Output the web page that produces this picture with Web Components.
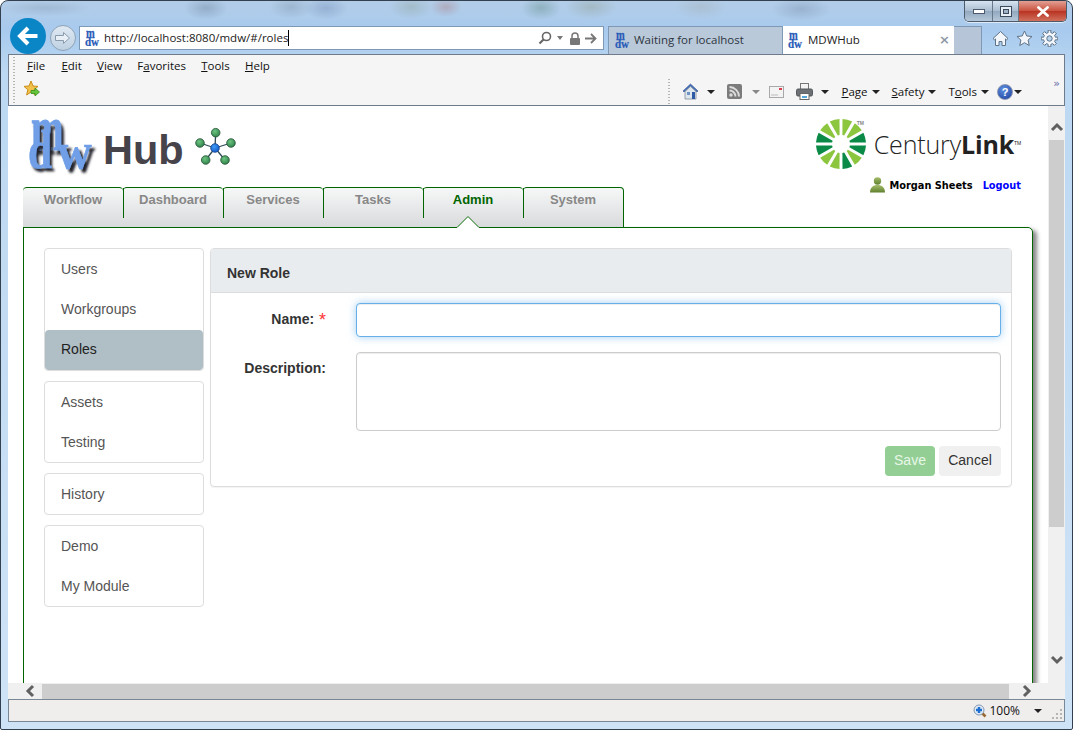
<!DOCTYPE html>
<html>
<head>
<meta charset="utf-8">
<title>MDWHub</title>
<style>
html, body { margin: 0; padding: 0; overflow: hidden; }
</style>
</head>
<body>
<ie-window>
    <ie-navbar slot="nav"></ie-navbar>
    <ie-toolbars slot="tools"></ie-toolbars>
    <mdw-page slot="page">
        <mdw-header></mdw-header>
        <mdw-tabs></mdw-tabs>
        <mdw-panel>
            <nav-card slot="nav">
                <nav-item>Users</nav-item>
                <nav-item>Workgroups</nav-item>
                <nav-item active>Roles</nav-item>
            </nav-card>
            <nav-card slot="nav">
                <nav-item>Assets</nav-item>
                <nav-item>Testing</nav-item>
            </nav-card>
            <nav-card slot="nav">
                <nav-item>History</nav-item>
            </nav-card>
            <nav-card slot="nav">
                <nav-item>Demo</nav-item>
                <nav-item>My Module</nav-item>
            </nav-card>
            <role-form></role-form>
        </mdw-panel>
    </mdw-page>
    <ie-scrollbar slot="vscroll" dir="v"></ie-scrollbar>
    <ie-scrollbar slot="hscroll" dir="h"></ie-scrollbar>
    <ie-status slot="status"></ie-status>
</ie-window>

<script>
const UI_FONT = `"Open Sans", "Noto Sans", sans-serif`

// small blue mdw favicon, used in the address bar and in both browser tabs
class mdwIcon extends HTMLElement {
    constructor() {
        super()
        this.attachShadow({ mode: 'open' }).innerHTML = `
<style>
:host { display: inline-block; width: 15px; height: 16px; flex: none; }
svg { display: block; overflow: visible; }
text { font-family: "Liberation Serif", serif; font-weight: 700; fill: #2a5cb8; stroke: #2a5cb8; stroke-width: .2px; }
</style>
<svg width="15" height="16" viewBox="0 0 15 16">
    <text transform="translate(1 8) scale(1.05 1.5)" font-size="10">m</text>
    <text transform="translate(0 15.500) scale(1.1 1.15)" font-size="10">dw</text>
</svg>`
    }
}
customElements.define('mdw-icon', mdwIcon)

// the aero glass window with its frame
class ieWindow extends HTMLElement {
    constructor() {
        super()
        this.attachShadow({ mode: 'open' }).innerHTML = `
<style>
:host {
    display: flex;
    flex-direction: column;
    box-sizing: border-box;
    width: 1073px;
    height: 730px;
    padding: 0 7px 7px;
    position: relative;
    overflow: hidden;
    border: 1px solid #33404f;
    border-radius: 8px 8px 2px 2px;
    background:
        radial-gradient(ellipse 22px 12px at 205px 7px, rgba(95,115,140,.35), transparent),
        radial-gradient(ellipse 22px 12px at 290px 6px, rgba(110,130,150,.3), transparent),
        radial-gradient(ellipse 22px 12px at 325px 7px, rgba(100,125,170,.35), transparent),
        radial-gradient(ellipse 22px 12px at 410px 6px, rgba(130,150,130,.3), transparent),
        radial-gradient(ellipse 16px 10px at 445px 6px, rgba(170,110,110,.35), transparent),
        radial-gradient(ellipse 20px 12px at 540px 7px, rgba(90,135,125,.4), transparent),
        radial-gradient(ellipse 26px 12px at 590px 6px, rgba(130,140,110,.3), transparent),
        radial-gradient(ellipse 26px 12px at 700px 6px, rgba(160,170,170,.35), transparent),
        radial-gradient(ellipse 30px 12px at 800px 8px, rgba(110,130,160,.35), transparent),
        radial-gradient(ellipse 45px 8px at 45px 7px, rgba(130,150,175,.35), transparent),
        linear-gradient(#b3cde8 0, #a8caee 30px, #bcd8f2 70px, #cfe3f6 100%);
}
.nav { flex: none; height: 53px; }
.tools { flex: none; height: 52px; }
.view { flex: none; display: flex; height: 577px; background: #fff; }
.h { flex: none; height: 16px; }
.status { flex: none; height: 23px; }
</style>
<div class="nav"><slot name="nav"></slot></div>
<div class="tools"><slot name="tools"></slot></div>
<div class="view"><slot name="page"></slot><slot name="vscroll"></slot></div>
<div class="h"><slot name="hscroll"></slot></div>
<div class="status"><slot name="status"></slot></div>`
    }
}
customElements.define('ie-window', ieWindow)

class ieNavbar extends HTMLElement {
    constructor() {
        super()
        // gear outline for the tools button
        let gear = ''
        for (let i = 0; i < 16; i++) {
            const rad = i % 2 ? 6 : 8.4
            for (const off of [-.17, .17]) {
                const t = i * Math.PI / 8 + off
                gear += `${i || off > 0 ? 'L' : 'M'}${(8.5 + rad * Math.cos(t)).toFixed(1)} ${(8.5 + rad * Math.sin(t)).toFixed(1)}`
            }
        }
        this.attachShadow({ mode: 'open' }).innerHTML = `
<style>
:host { display: flex; flex-direction: column; height: 53px; font: 11.5px ${UI_FONT}; color: #222; }
.caption { display: flex; justify-content: flex-end; height: 25px; margin-right: -2px; box-sizing: border-box; }
.caps { display: flex; height: 20px; border: 1px solid #4d5b6b; border-top: 0; border-radius: 0 0 5px 5px; overflow: hidden; box-shadow: 0 1px 0 rgba(255,255,255,.6); }
.caps div { display: flex; align-items: center; justify-content: center; height: 100%; background: linear-gradient(#d6e3f0, #a9bccf 50%, #93a9bf 52%, #b5c8da); border-right: 1px solid #66788a; box-sizing: border-box; }
.min { width: 28px; } .max { width: 26px; }
.close { width: 47px; border-right: 0 !important; background: linear-gradient(#e2a094, #c9503d 50%, #b93423 52%, #d0705c) !important; }
.row { display: flex; align-items: flex-start; height: 28px; }
.back { flex: none; width: 36px; height: 36px; margin: -8px 0 0 2px; border-radius: 50%; background: #0a85c6; display: flex; align-items: center; justify-content: center; position: relative; z-index: 2; }
.fwd { flex: none; box-sizing: border-box; width: 26px; height: 26px; margin: -1px 0 0 4px; border-radius: 50%; border: 1px solid #8fa3b6; background: linear-gradient(#dfe9f3, #bfd1e2); display: flex; align-items: center; justify-content: center; }
.addr { flex: none; box-sizing: border-box; display: flex; align-items: center; width: 525px; height: 24px; margin-left: 3px; padding: 0 6px 0 5px; background: #fff; border: 1px solid #7e99b5; }
.url { margin-left: 4px; border-right: 1px solid #000; line-height: 16px; white-space: nowrap; font-size: 11.5px; }
.addr-tools { display: flex; align-items: center; margin-left: auto; }
.caret { width: 0; height: 0; border: 3.500px solid transparent; border-top: 4px solid #777; border-bottom: 0; margin: 0 6px 0 5px; }
.tabs { display: flex; margin-left: 4px; height: 28px; }
.tab { box-sizing: border-box; display: flex; align-items: center; padding: 0 5px 2px 6px; height: 28px; border: 1px solid #7e99b5; border-bottom: 0; }
.tab span { margin-left: 4px; white-space: nowrap; }
.t1 { width: 174px; background: #b9c9da; color: #2d3540; border-right: 0; }
.t2 { width: 172px; background: #fff; border-width: 0 0 0 1px; padding: 1px 5px 2px 5px; }
.t2 span { margin-left: 5px; }
.t2 b { margin-left: auto; margin-right: -1px; font: 700 13px "DejaVu Sans", sans-serif; color: #8d98a3; }
.t3 { width: 28px; background: #b6c6d8; border-left: 0; }
.icons { display: flex; align-items: center; height: 24px; margin-left: 10px; gap: 7px; }
</style>
<div class="caption">
    <div class="caps">
        <div class="min"><svg width="12" height="6"><rect x="0.5" y="1.5" width="11" height="4" fill="#fff" stroke="#4a5a6a"/></svg></div>
        <div class="max"><svg width="12" height="11"><rect x="0.5" y="0.5" width="11" height="10" fill="#e6eef6" stroke="#3d4c5c"/><rect x="3.5" y="3.5" width="5" height="4" fill="#9db2c6" stroke="#3d4c5c"/></svg></div>
        <div class="close"><svg width="14" height="11"><path d="M2.500 1.500l9 8M11.500 1.500l-9 8" stroke="#fff" stroke-width="2.800" fill="none" stroke-linecap="round"/></svg></div>
    </div>
</div>
<div class="row">
    <div class="back"><svg width="24" height="20" viewBox="0 0 24 20"><path d="M12 2l-8 8 8 8M4.500 10h17" stroke="#fff" stroke-width="4" fill="none"/></svg></div>
    <div class="fwd"><svg width="18" height="14" viewBox="0 0 18 14"><path d="M9.500 1.500l6 5.500-6 5.500v-3h-8v-5h8z" fill="#e8eff6" stroke="#8a9bac"/></svg></div>
    <div class="addr">
        <mdw-icon></mdw-icon>
        <span class="url">http://localhost:8080/mdw/#/roles</span>
        <span class="addr-tools">
            <svg width="14" height="14" viewBox="0 0 14 14"><circle cx="8.500" cy="5.500" r="4" fill="none" stroke="#666" stroke-width="1.600"/><path d="M5.500 8.500L1.500 12.500" stroke="#666" stroke-width="2.200"/></svg>
            <i class="caret"></i>
            <svg width="12" height="13" viewBox="0 0 12 13"><path d="M3 6V4a3 3 0 0 1 6 0v2" fill="none" stroke="#777" stroke-width="1.500"/><rect x="1" y="6" width="10" height="7" rx="1" fill="#777"/></svg>
            <svg style="margin-left:4px" width="12" height="11" viewBox="0 0 12 11"><path d="M0 5.500h10M6 1l4.500 4.500L6 10" fill="none" stroke="#777" stroke-width="1.800"/></svg>
        </span>
    </div>
    <div class="tabs">
        <div class="tab t1"><mdw-icon></mdw-icon><span>Waiting for localhost</span></div>
        <div class="tab t2"><mdw-icon></mdw-icon><span>MDWHub</span><b>×</b></div>
        <div class="tab t3"></div>
    </div>
    <div class="icons">
        <svg width="17" height="17" viewBox="0 0 17 17"><path d="M8.500 1.500L1 8.500l1.500 1.300 1-.9V15.500h3.500v-4h3v4h3.500V8.900l1 .9L16 8.500z" fill="#f3f7fb" stroke="#5f7388"/></svg>
        <svg width="17" height="17" viewBox="0 0 17 17"><path d="M8.500 1l2.300 5 5.200.5-3.900 3.500 1.100 5.500-4.700-2.800-4.700 2.800 1.100-5.500L1 6.500 6.200 6z" fill="#f3f7fb" stroke="#5f7388"/></svg>
        <svg style="margin-left:1px" width="17" height="17" viewBox="0 0 17 17"><path d="${gear}Z" fill="#f3f7fb" stroke="#5f7388"/><circle cx="8.500" cy="8.500" r="2.700" fill="#b9d3ec" stroke="#5f7388"/></svg>
    </div>
</div>`
    }
}
customElements.define('ie-navbar', ieNavbar)

class ieToolbars extends HTMLElement {
    constructor() {
        super()
        this.attachShadow({ mode: 'open' }).innerHTML = `
<style>
:host { display: block; box-sizing: border-box; height: 52px; background: #f5f5f5; border: 1px solid #6d7b8b; font: 11.5px ${UI_FONT}; color: #111; position: relative; }
.grip { width: 2px; flex: none; background: repeating-linear-gradient(#b5b5b5 0 1px, transparent 1px 3px); }
.menu { display: flex; align-items: center; height: 21px; margin-bottom: 2px; }
.grip.g1 { position: absolute; left: 4px; top: 2px; height: 46px; }
.menu span { white-space: nowrap; margin-left: 15.200px; }
.menu span:first-of-type { margin-left: 18px; margin-right: 1px; }
.cmd { display: flex; height: 27px; }
.fav { margin: 2px 0 0 14px; }
.right { display: flex; align-items: center; margin: 1px 0 0 auto; height: 25px; }
.right .grip { height: 25px; margin-right: 12px; }
.c { flex: none; width: 0; height: 0; border: 4px solid transparent; border-top: 4px solid #222; border-bottom: 0; margin-left: 4px; }
.c.lt { border-top-color: #888; }
.t { white-space: nowrap; }
.more { position: absolute; right: 4px; top: 22px; color: #6a6aa8; font: 11px "DejaVu Sans", sans-serif; }
.help { flex: none; display: flex; align-items: center; justify-content: center; width: 16px; height: 16px; border-radius: 50%; background: radial-gradient(circle at 40% 30%, #5e8fe0, #1c3f9c); border: 1px solid #8b97b0; box-sizing: border-box; color: #fff; font: 700 11px "Liberation Sans", sans-serif; }
</style>
<i class="grip g1"></i>
<div class="menu">
    <span><u>F</u>ile</span><span><u>E</u>dit</span><span><u>V</u>iew</span><span>F<u>a</u>vorites</span><span><u>T</u>ools</span><span><u>H</u>elp</span>
</div>
<div class="cmd">
    <svg class="fav" width="18" height="18" viewBox="0 0 18 18"><path d="M8 1l2 5 5 .4-3.800 3.300L12.400 15 8 12l-4.400 3 1.200-5.300L1 6.400 6 6z" fill="#f2c14a" stroke="#c98d1c"/><path d="M8 10.500h4V8l4.500 4-4.500 4v-2.500H8z" fill="#63c63a" stroke="#3a8f23" stroke-width=".8"/></svg>
    <div class="right">
        <i class="grip"></i>
        <svg width="17" height="17" viewBox="0 0 17 17"><path d="M8.500 1L1 8l1 1 6.500-6L15 9l1-1z" fill="#3f6fc0" stroke="#2f4f8f" stroke-width=".6"/><path d="M3 8.500L8.500 3.500 14 8.500V16H3z" fill="#dfe7ee" stroke="#7d8b99" stroke-width=".8"/><rect x="5" y="9" width="3" height="3" fill="#6f93c4"/><rect x="10" y="9" width="3" height="7" fill="#2f5aa6"/></svg>
        <i class="c" style="margin-left:8px"></i>
        <svg style="margin-left:12px" width="15" height="15" viewBox="0 0 15 15"><rect width="15" height="15" rx="2" fill="#7c7c7c"/><circle cx="4" cy="11" r="1.700" fill="#ddd"/><path d="M2.500 6.500a6 6 0 0 1 6 6M2.500 3a9.500 9.500 0 0 1 9.500 9.500" stroke="#ddd" stroke-width="1.800" fill="none"/></svg>
        <i class="c lt" style="margin-left:10px"></i>
        <svg style="margin-left:9px" width="15" height="12" viewBox="0 0 15 12"><rect x=".5" y=".5" width="14" height="11" fill="#f3f3f3" stroke="#a9a9a9"/><path d="M2 9h7" stroke="#bbb"/><rect x="10" y="2" width="3" height="2" fill="#d9404c"/></svg>
        <svg style="margin-left:12px" width="17" height="17" viewBox="0 0 17 17"><rect x="4.500" y=".5" width="8" height="6" fill="#f4f4f4" stroke="#777"/><rect x=".5" y="6" width="16" height="7" rx="1.500" fill="#6d7075" stroke="#55585c"/><rect x="4" y="10.500" width="9" height="6" fill="#fff" stroke="#666"/><rect x="6" y="13" width="5" height="2" fill="#54a6d8"/></svg>
        <i class="c" style="margin-left:8px"></i>
        <span class="t" style="margin-left:13px"><u>P</u>age</span><i class="c"></i>
        <span class="t" style="margin-left:12px"><u>S</u>afety</span><i class="c"></i>
        <span class="t" style="margin-left:12px">T<u>o</u>ols</span><i class="c"></i>
        <span class="help" style="margin-left:8px">?</span><i class="c" style="margin-left:1px"></i>
    </div>
    <div style="width:42px;flex:none"></div>
</div>
<span class="more">»</span>`
    }
}
customElements.define('ie-toolbars', ieToolbars)

class ieScrollbar extends HTMLElement {
    constructor() {
        super()
        const vertical = this.getAttribute('dir') === 'v'
        const arrow = deg => `<svg width="14" height="12" viewBox="0 0 14 12" style="transform:rotate(${deg}deg)"><path d="M2 9l5-5 5 5" fill="none" stroke="#606060" stroke-width="3"/></svg>`
        this.attachShadow({ mode: 'open' }).innerHTML = `
<style>
:host { display: flex; flex: none; background: #f0f0f0; box-sizing: border-box; }
:host([dir=v]) { flex-direction: column; width: 17px; height: 577px; }
:host([dir=h]) { height: 16px; padding-right: 17px; }
.btn { flex: none; box-sizing: border-box; display: flex; align-items: center; justify-content: center; }
:host([dir=v]) .btn { height: 34px; }
:host([dir=h]) .btn { width: 34px; }
:host([dir=v]) .first { padding-top: 8px; }
:host([dir=v]) .last { padding-bottom: 12px; }
:host([dir=h]) .first { padding-left: 9px; }
:host([dir=h]) .last { padding-right: 8px; }
.thumb { background: #cdcdcd; flex: none; }
:host([dir=v]) .thumb { width: 15px; height: 387px; margin-left: 1px; }
:host([dir=h]) .thumb { width: 967px; height: 15px; margin-top: 1px; }
.fill { flex: 1; }
</style>
<div class="btn first">${arrow(vertical ? 0 : -90)}</div>
<div class="thumb"></div>
<div class="fill"></div>
<div class="btn last">${arrow(vertical ? 180 : 90)}</div>`
    }
}
customElements.define('ie-scrollbar', ieScrollbar)

class ieStatus extends HTMLElement {
    constructor() {
        super()
        this.attachShadow({ mode: 'open' }).innerHTML = `
<style>
:host { display: flex; align-items: center; justify-content: flex-end; box-sizing: border-box; height: 23px; background: #f0eded; border: 1px solid #7a8794; font: 12px ${UI_FONT}; color: #111; position: relative; }
.zoom { margin-left: 2px; }
.c { width: 0; height: 0; border: 4px solid transparent; border-top: 4px solid #222; border-bottom: 0; margin: 0 22px 0 14px; }
.grip { position: absolute; right: 2px; bottom: 2px; }
</style>
<svg width="14" height="14" viewBox="0 0 14 14"><path d="M8.500 8.500l4 4" stroke="#9a6a32" stroke-width="2.600"/><circle cx="6" cy="6" r="5" fill="#dfeaf6" stroke="#8398ad"/><path d="M6 3v6M3 6h6" stroke="#1c6fd0" stroke-width="2.400"/></svg>
<span class="zoom">100%</span>
<i class="c"></i>
<svg class="grip" width="10" height="10" viewBox="0 0 10 10" fill="#b5b5b5"><rect x="8" y="0" width="2" height="2"/><rect x="4" y="4" width="2" height="2"/><rect x="8" y="4" width="2" height="2"/><rect x="0" y="8" width="2" height="2"/><rect x="4" y="8" width="2" height="2"/><rect x="8" y="8" width="2" height="2"/></svg>`
    }
}
customElements.define('ie-status', ieStatus)

// the web page inside the browser
class mdwPage extends HTMLElement {
    constructor() {
        super()
        this.attachShadow({ mode: 'open' }).innerHTML = `
<style>
:host { display: block; flex: none; box-sizing: border-box; width: 1040px; height: 577px; padding-left: 15px; overflow: hidden; background: #fff; font: 14px "Liberation Sans", Arial, sans-serif; color: #333; }
</style>
<slot></slot>`
    }
}
customElements.define('mdw-page', mdwPage)

class mdwHeader extends HTMLElement {
    constructor() {
        super()
        const spokes = []
        const colors = ['L','L','D','D','L','D','L','L','D','D','L','L']
        const R = 25, r = 9, half = 11.5 * Math.PI / 180
        colors.forEach((c, i) => {
            const a = (15 + 30 * i - 90) * Math.PI / 180
            const p = (rad, t) => `${(26 + rad * Math.cos(t)).toFixed(1)} ${(26 + rad * Math.sin(t)).toFixed(1)}`
            spokes.push(`<path d="M${p(r, a - half * .5)}L${p(R, a - half)}A${R} ${R} 0 0 1 ${p(R, a + half)}L${p(r, a + half * .5)}Z" fill="${c === 'L' ? '#8cc63f' : '#0a8a46'}"/>`)
        })
        const cx = 21, cy = 21
        const nodes = [[21.700,5.700],[37,16],[31,33],[11.700,33],[6,16]]
        this.attachShadow({ mode: 'open' }).innerHTML = `
<style>
:host { display: flex; justify-content: space-between; height: 81px; box-sizing: border-box; }
.brand { display: flex; align-items: flex-start; padding: 9px 0 0 4px; }
.hub { font: 700 41.500px/42px "Liberation Sans", sans-serif; color: #46434b; margin: 14px 0 0 6px; }
.net { margin: 12px 0 0 10px; }
.logo { overflow: visible; }
.logo text { font-family: "Liberation Serif", serif; font-weight: 700; fill: #6f9fe8; stroke: #6f9fe8; stroke-width: .4px; filter: url(#sh); }
.corp { display: flex; flex-direction: column; align-items: flex-end; padding: 12px 27px 0 0; }
.cl { display: flex; align-items: center; height: 52px; position: relative; }
.cl small { position: absolute; left: 42px; top: 2px; font: 700 5px "Liberation Sans", sans-serif; color: #888; }
.word { font: 300 25px "Open Sans", sans-serif; color: #222; margin-left: 7px; letter-spacing: -.15px; white-space: nowrap; }
.word b { font-weight: 700; }
.word sup { font: 5px "Liberation Sans", sans-serif; vertical-align: 9px; margin-left: 0; }
.user { display: flex; align-items: center; margin-top: 7px; font: 700 9.800px "DejaVu Sans", sans-serif; color: #000; white-space: nowrap; }
.user svg { margin-right: 4px; }
.user a { color: #00f; margin-left: 10px; text-decoration: none; }
</style>
<div class="brand">
    <svg class="logo" width="70" height="58" viewBox="0 0 70 58">
        <defs>
            <filter id="sh" x="-15%" y="-15%" width="135%" height="135%"><feDropShadow dx="2" dy="2" stdDeviation=".7" flood-color="#20242c"/></filter>
        </defs>
        <text transform="translate(4 35) scale(1.3 2.1)" font-size="30">m</text>
        <text transform="translate(1 53) scale(1.2 1.55)" font-size="36">d</text>
        <text transform="translate(30 53) scale(1.6 1.7)" font-size="30">w</text>
    </svg>
    <span class="hub">Hub</span>
    <svg class="net" width="42" height="42" viewBox="0 0 42 42">
        <defs>
            <radialGradient id="gn" cx=".4" cy=".35" r=".7"><stop offset="0" stop-color="#6cc480"/><stop offset="1" stop-color="#2d7f48"/></radialGradient>
            <radialGradient id="bl" cx=".4" cy=".35" r=".7"><stop offset="0" stop-color="#3f9cf5"/><stop offset="1" stop-color="#1158c8"/></radialGradient>
        </defs>
        ${nodes.map(n => `<path d="M${cx} ${cy}L${n[0]} ${n[1]}" stroke="#2e4a55" stroke-width="1.300"/>`).join('')}
        ${nodes.map(n => `<circle cx="${n[0]}" cy="${n[1]}" r="4.300" fill="url(#gn)" stroke="#245236" stroke-width=".8"/>`).join('')}
        <circle cx="${cx}" cy="${cy}" r="4.300" fill="url(#bl)" stroke="#14408a" stroke-width=".8"/>
    </svg>
</div>
<div class="corp">
    <div class="cl">
        <svg width="52" height="52" viewBox="0 0 52 52">${spokes.join('')}</svg>
        <small>TM</small>
        <span class="word">Century<b>Link</b><sup>TM</sup></span>
    </div>
    <div class="user">
        <svg width="15" height="16" viewBox="0 0 15 16"><defs><linearGradient id="u" x1="0" y1="0" x2="0" y2="1"><stop offset="0" stop-color="#a5bd6a"/><stop offset="1" stop-color="#5f8030"/></linearGradient></defs><circle cx="7.500" cy="4" r="3.700" fill="url(#u)"/><path d="M0 15.500c0-5 3-7.500 7.500-7.500s7.500 2.500 7.500 7.500z" fill="url(#u)"/></svg>
        <span>Morgan Sheets</span><a>Logout</a>
    </div>
</div>`
    }
}
customElements.define('mdw-header', mdwHeader)

class mdwTabs extends HTMLElement {
    constructor() {
        super()
        const names = ['Workflow', 'Dashboard', 'Services', 'Tasks', 'Admin', 'System']
        this.attachShadow({ mode: 'open' }).innerHTML = `
<style>
:host { display: flex; height: 41px; position: relative; z-index: 1; }
.tab { flex: none; box-sizing: border-box; width: 100px; height: 41px; padding-top: 4px; position: relative; text-align: center; font: 700 13px/16px "Liberation Sans", sans-serif; color: #888; background: linear-gradient(#f6f7f7, #d9dadc); border-top: 1px solid #006400; border-bottom: 1px solid #006400; border-radius: 4px 4px 0 0; }
.tab:first-child { border-left: 1px solid #006400; }
.tab:last-child { width: 101px; border-right: 1px solid #006400; }
.tab + .tab::before { content: ""; position: absolute; left: 0; top: 0; height: 30px; border-left: 1px solid #006400; }
.on { color: #006400; }
.notch { position: absolute; left: 33px; bottom: -1px; display: block; }
</style>
${names.map(n => `<div class="tab${n === 'Admin' ? ' on' : ''}">${n}${n === 'Admin' ? '<svg class="notch" width="24" height="13" viewBox="0 0 24 13"><path d="M0 13L12 1l12 12z" fill="#fff"/><path d="M0 12.500h1L12 1.500 23 12.500h1" fill="none" stroke="#006400"/></svg>' : ''}</div>`).join('')}`
    }
}
customElements.define('mdw-tabs', mdwTabs)

class mdwPanel extends HTMLElement {
    constructor() {
        super()
        this.attachShadow({ mode: 'open' }).innerHTML = `
<style>
:host { display: grid; grid-template-columns: 160px 802px; column-gap: 6px; align-items: start; box-sizing: border-box; width: 1010px; height: 480px; margin-top: -1px; padding: 20px; border: 1px solid #006400; border-top-right-radius: 5px; box-shadow: 4px 3px 4px #888; background: #fff; }
.side { display: flex; flex-direction: column; gap: 10px; }
</style>
<div class="side"><slot name="nav"></slot></div>
<slot></slot>`
    }
}
customElements.define('mdw-panel', mdwPanel)

class navCard extends HTMLElement {
    constructor() {
        super()
        this.attachShadow({ mode: 'open' }).innerHTML = `
<style>
:host { display: block; border: 1px solid #ddd; border-radius: 4px; background: #fff; }
</style>
<slot></slot>`
    }
}
customElements.define('nav-card', navCard)

class navItem extends HTMLElement {
    constructor() {
        super()
        this.attachShadow({ mode: 'open' }).innerHTML = `
<style>
:host { display: block; box-sizing: border-box; height: 40px; padding: 10px 16px; line-height: 20px; color: #555; }
:host([active]) { margin-top: 1px; padding-top: 9px; background: #b0bec5; color: #222; border-radius: 4px; }
</style>
<slot></slot>`
    }
}
customElements.define('nav-item', navItem)

class roleForm extends HTMLElement {
    constructor() {
        super()
        this.attachShadow({ mode: 'open' }).innerHTML = `
<style>
:host { display: block; box-sizing: border-box; height: 239px; border: 1px solid #ddd; border-radius: 4px; box-shadow: 0 1px 1px rgba(0,0,0,.05); }
.head { box-sizing: border-box; height: 44px; padding: 16px 16px 0; line-height: 17px; font-weight: 700; color: #333; background: #e9ecef; border-bottom: 1px solid #ddd; border-radius: 3px 3px 0 0; }
.body { display: grid; grid-template-columns: 115px 1fr; gap: 15px 30px; padding: 10px 10px 11px 0; }
label { padding-top: 6px; line-height: 20px; font-weight: 700; text-align: right; color: #333; white-space: nowrap; }
label i { font: 400 18px/0 "Liberation Sans", sans-serif; color: #f33; position: relative; top: 2px; margin: 0 0 0 1px; }
input, textarea { display: block; box-sizing: border-box; width: 100%; margin: 0; border: 1px solid #ccc; border-radius: 4px; background: #fff; font: inherit; outline: none; resize: none; box-shadow: inset 0 1px 1px rgba(0,0,0,.075); }
input { height: 34px; border-color: #66afe9; box-shadow: inset 0 1px 1px rgba(0,0,0,.075), 0 0 8px rgba(102,175,233,.6); }
textarea { height: 79px; }
.btns { grid-column: 2; display: flex; justify-content: flex-end; gap: 4px; }
button { box-sizing: border-box; height: 30px; border: 1px solid transparent; border-radius: 4px; font: inherit; padding: 0 0 2px; }
.save { width: 50px; background: #93cf95; color: #e8f6e8; }
.cancel { width: 62px; background: #f0f0f0; color: #333; }
</style>
<div class="head">New Role</div>
<div class="body">
    <label>Name: <i>*</i></label><input type="text">
    <label>Description:</label><textarea></textarea>
    <div class="btns"><button class="save">Save</button><button class="cancel">Cancel</button></div>
</div>`
    }
}
customElements.define('role-form', roleForm)
</script>
</body>
</html>
